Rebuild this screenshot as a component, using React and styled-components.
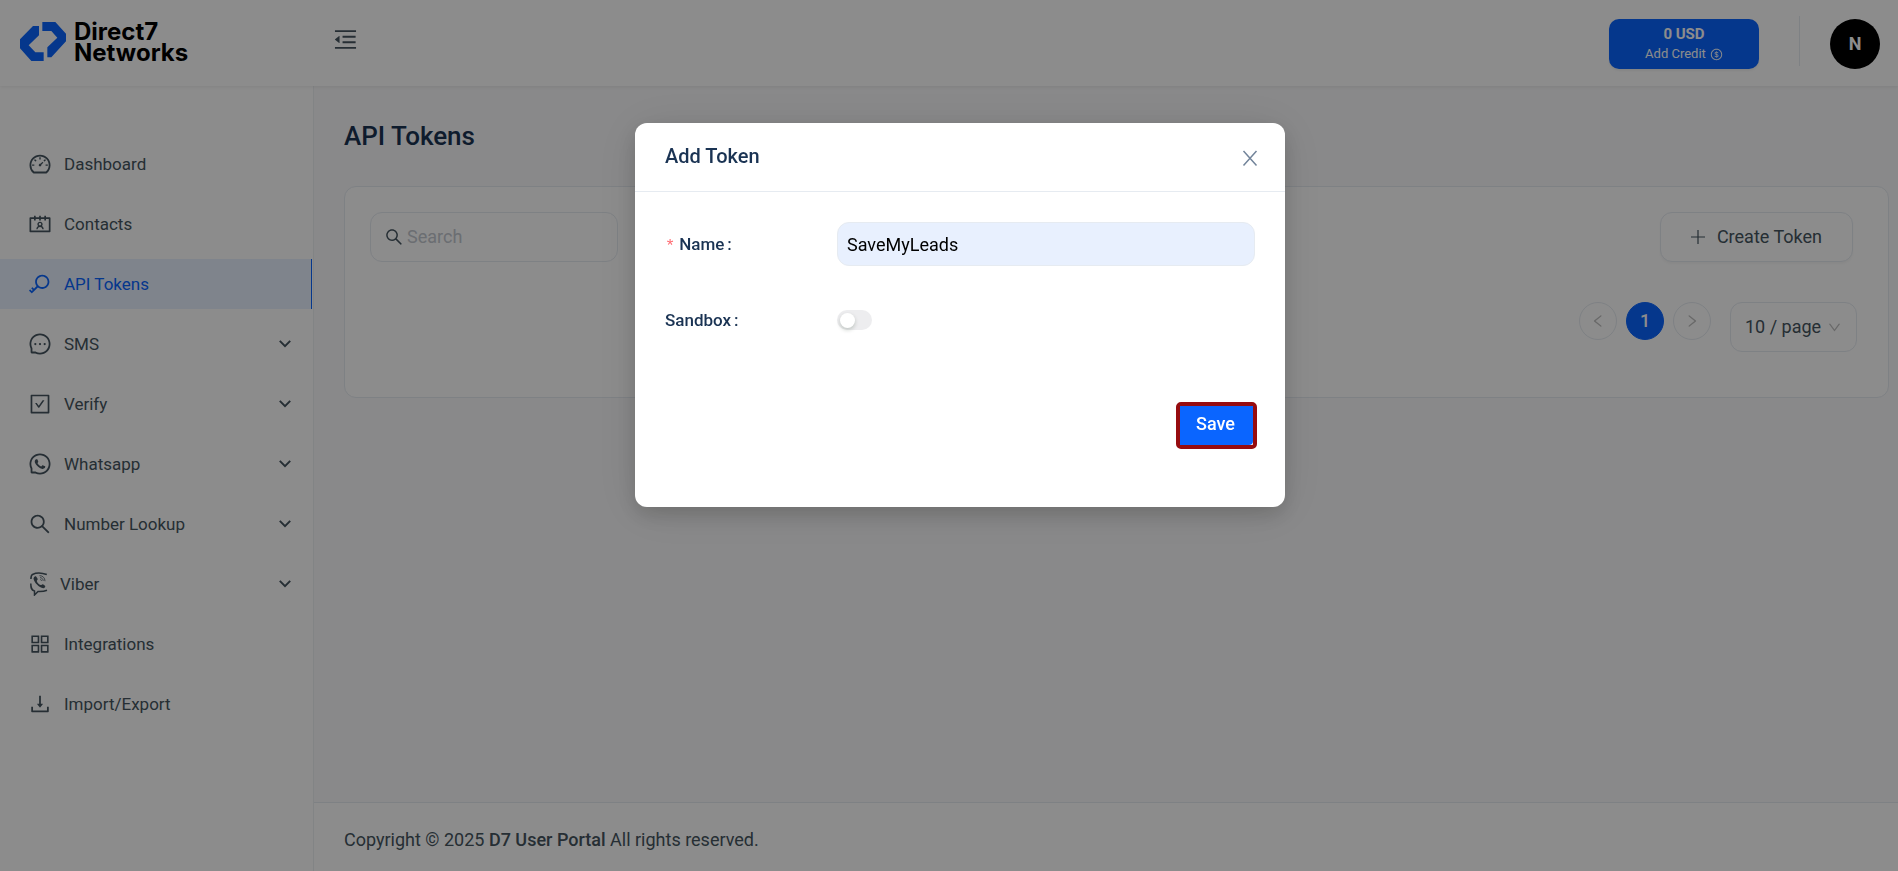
import React, { useState } from "react";
import styled, { createGlobalStyle, css } from "styled-components";
import {
  AiOutlineAppstore,
  AiOutlineCheckSquare,
  AiOutlineContacts,
  AiOutlineDashboard,
  AiOutlineDollar,
  AiOutlineDown,
  AiOutlineDownload,
  AiOutlineKey,
  AiOutlineLeft,
  AiOutlineMenuFold,
  AiOutlineMessage,
  AiOutlineRight,
  AiOutlineSearch,
  AiOutlineWhatsApp,
} from "react-icons/ai";

const GlobalStyle = createGlobalStyle`
  *, *::before, *::after {
    box-sizing: border-box;
  }
  body {
    margin: 0;
    background: #fafafb;
    color: #455560;
    font-family: Roboto, "Liberation Sans", sans-serif;
    font-size: 18px;
    line-height: 26px;
  }
  button, input, select {
    font: inherit;
    color: inherit;
  }
`;

const ViberIcon = () => (
  <svg width="20" height="24" viewBox="-2 0 20 24" fill="none" stroke="currentColor">
    <path d="M16.800 2.600C12 .8 6 .8 2.500 2.400 1.200 3.200 1 5 .9 7" strokeWidth="1.600" />
    <path
      d="M.8 11.500c0 4 .3 6.500 3.700 7.500v4l3.500-3.600c3.500.2 6.500-.2 9-1.200"
      strokeWidth="1.500"
    />
    <path
      d="M4 5.200c.8-1 1.700-1.300 2.300-.5l1.300 2c.5.900-.9 1.500-.8 2.400.6 2 2 3.400 3.900 4 .9.200 1.300-1.300 2.300-.8l2 1.400c.9.800-.4 2.600-1.700 2.600C9 15.500 4 10.500 3.500 6.500z"
      fill="currentColor"
      stroke="none"
    />
    <path
      d="M9.500 3.600c3.300.1 5.500 2.300 5.500 5.600M10 5.600c2 .2 3.100 1.400 3.200 3.300M10.300 7.500c.8.100 1.200.5 1.200 1.300"
      strokeWidth=".8"
    />
  </svg>
);

const ChevronIcon = () => (
  <svg width="12" height="8" viewBox="0 0 12 8" fill="none" stroke="currentColor" strokeWidth="2">
    <path d="M.8.9 6 6.100 11.200.9" />
  </svg>
);

const PlusIcon = () => (
  <svg width="14" height="14" viewBox="0 0 14 14" stroke="currentColor" strokeWidth="1.200">
    <path d="M7 0v14M0 7h14" />
  </svg>
);

const CloseIcon = () => (
  <svg width="16" height="18" viewBox="0 0 16 18" stroke="currentColor" strokeWidth="1.500">
    <path d="M1.500 2 14.500 16.500M14.500 2 1.500 16.500" />
  </svg>
);

const LogoIcon = () => (
  <svg width="46" height="39" viewBox="16 20 138 117" fill="#0a65ff">
    <path d="M73 32v28L42 90l20 21h25v26H50L16 99V72l39-40z" />
    <path d="M83 20h39l32 35v23l-44 48H98V96l30-29-18-20H83z" />
  </svg>
);

const navItems = [
  { title: "Dashboard", icon: AiOutlineDashboard },
  { title: "Contacts", icon: AiOutlineContacts },
  { title: "API Tokens", icon: AiOutlineKey, active: true },
  { title: "SMS", icon: AiOutlineMessage, sub: true },
  { title: "Verify", icon: AiOutlineCheckSquare, sub: true },
  { title: "Whatsapp", icon: AiOutlineWhatsApp, sub: true },
  { title: "Number Lookup", icon: AiOutlineSearch, sub: true },
  { title: "Viber", icon: ViberIcon, sub: true },
  { title: "Integrations", icon: AiOutlineAppstore },
  { title: "Import/Export", icon: AiOutlineDownload },
];

const TokenModal = () => {
  const [name, setName] = useState("SaveMyLeads");
  const [sandbox, setSandbox] = useState(false);

  return (
    <Mask>
      <Dialog role="dialog" aria-modal="true" aria-labelledby="modal-title">
        <DialogHeader>
          <DialogTitle id="modal-title">Add Token</DialogTitle>
          <CloseButton aria-label="Close">
            <CloseIcon />
          </CloseButton>
        </DialogHeader>
        <Form onSubmit={(e) => e.preventDefault()}>
          <FormRow>
            <Label htmlFor="name">
              <Required>*</Required>Name<Colon>:</Colon>
            </Label>
            <NameInput
              id="name"
              value={name}
              onChange={(e) => setName(e.target.value)}
            />
          </FormRow>
          <FormRow>
            <Label htmlFor="sandbox">
              Sandbox<Colon>:</Colon>
            </Label>
            <Switch
              id="sandbox"
              type="checkbox"
              checked={sandbox}
              onChange={(e) => setSandbox(e.target.checked)}
            />
          </FormRow>
          <SaveFrame>
            <SaveButton type="submit">Save</SaveButton>
          </SaveFrame>
        </Form>
      </Dialog>
    </Mask>
  );
};

const App = () => {
  return (
    <>
      <GlobalStyle />
      <Page>
        <Header>
          <Logo href="#">
            <LogoIcon />
            <LogoText>
              Direct7
              <br />
              Networks
            </LogoText>
          </Logo>
          <FoldButton aria-label="Collapse menu">
            <AiOutlineMenuFold />
          </FoldButton>
          <CreditButton>
            <strong>0 USD</strong>
            <span>
              Add Credit <AiOutlineDollar />
            </span>
          </CreditButton>
          <Divider />
          <Avatar>N</Avatar>
        </Header>
        <Body>
          <SideNav>
            {navItems.map(({ title, icon: Icon, active, sub }) => (
              <NavItem key={title} href="#" $active={active}>
                <Icon />
                <span>{title}</span>
                {sub && <ChevronIcon />}
              </NavItem>
            ))}
          </SideNav>
          <Main>
            <Content>
              <PageTitle>API Tokens</PageTitle>
              <Card>
                <Toolbar>
                  <SearchBox>
                    <AiOutlineSearch />
                    <input type="text" placeholder="Search" aria-label="Search" />
                  </SearchBox>
                  <CreateButton>
                    <PlusIcon />
                    Create Token
                  </CreateButton>
                </Toolbar>
                <Pagination>
                  <PageButton aria-label="Previous page">
                    <AiOutlineLeft />
                  </PageButton>
                  <PageButton $current>1</PageButton>
                  <PageButton aria-label="Next page">
                    <AiOutlineRight />
                  </PageButton>
                  <PageSize>
                    <select aria-label="Page size" defaultValue="10">
                      <option value="10">10 / page</option>
                      <option value="20">20 / page</option>
                      <option value="50">50 / page</option>
                    </select>
                    <AiOutlineDown />
                  </PageSize>
                </Pagination>
              </Card>
            </Content>
            <Footer>
              Copyright © 2025 <b>D7 User Portal</b> All rights reserved.
            </Footer>
          </Main>
        </Body>
      </Page>
      <TokenModal />
    </>
  );
};

const Page = styled.div`
  display: flex;
  flex-direction: column;
  min-height: 100vh;
`;

// Header
const Header = styled.header`
  display: flex;
  align-items: center;
  height: 86px;
  padding: 2px 18px 0 20px;
  background: #ffffff;
  box-shadow: 0 1px 4px rgba(0, 0, 0, 0.08);
  z-index: 1;
`;

const Logo = styled.a`
  display: flex;
  align-items: center;
  gap: 8px;
  width: 312px;
  margin-bottom: 5px;
  color: #000000;
  text-decoration: none;
`;

const LogoText = styled.span`
  font-family: Inter, "Liberation Sans", sans-serif;
  font-size: 24px;
  font-weight: 700;
  line-height: 21px;
`;

const FoldButton = styled.button`
  display: flex;
  margin-right: auto;
  margin-bottom: 10px;
  padding: 0;
  border: 0;
  background: none;
  font-size: 27px;
`;

const CreditButton = styled.button`
  display: flex;
  flex-direction: column;
  align-items: center;
  justify-content: center;
  width: 150px;
  height: 50px;
  border: 0;
  border-radius: 10px;
  background: #0a65ff;
  box-shadow: 0 2px 2px rgba(0, 0, 0, 0.05);
  color: #ffffff;
  font-size: 15px;
  line-height: 20px;
  strong {
    font-weight: 700;
  }
  span {
    display: flex;
    align-items: center;
    gap: 4px;
    font-size: 13px;
  }
`;

const Divider = styled.div`
  width: 1px;
  height: 50px;
  margin: 0 30px 6px 40px;
  background: #e6ebf1;
`;

const Avatar = styled.div`
  display: flex;
  align-items: center;
  justify-content: center;
  width: 50px;
  height: 50px;
  border-radius: 50%;
  background: #000000;
  color: #ffffff;
  font-weight: 700;
`;

// Side navigation
const Body = styled.div`
  display: flex;
  flex: 1;
`;

const SideNav = styled.nav`
  display: flex;
  flex-direction: column;
  gap: 10px;
  width: 314px;
  padding-top: 53px;
  border-right: 1px solid #edf0f3;
  background: #ffffff;
`;

const NavItem = styled.a`
  display: flex;
  align-items: center;
  gap: 12px;
  height: 50px;
  margin-right: 1px;
  padding: 0 21px 0 28px;
  color: #455560;
  font-size: 17px;
  text-decoration: none;
  & > svg:first-child {
    height: 24px;
    font-size: 24px;
  }
  span {
    flex: 1;
  }
  ${({ $active }) =>
    $active &&
    css`
      border-right: 1px solid #0a65ff;
      background: #e7f0ff;
      color: #0a65ff;
    `}
`;

// Page content
const Main = styled.main`
  display: flex;
  flex: 1;
  flex-direction: column;
`;

const Content = styled.div`
  flex: 1;
  padding: 32px 9px 32px 30px;
`;

const PageTitle = styled.h1`
  margin: 0 0 32px;
  color: #1a3353;
  font-size: 26px;
  font-weight: 500;
  line-height: 36px;
`;

const Card = styled.section`
  padding: 25px 31px 45px 25px;
  border: 1px solid #e6ebf1;
  border-radius: 12px;
  background: #ffffff;
`;

const Toolbar = styled.div`
  display: flex;
  justify-content: space-between;
  padding-right: 4px;
`;

const outlined = css`
  height: 50px;
  border: 1px solid #e6ebf1;
  border-radius: 12px;
  background: #ffffff;
`;

const SearchBox = styled.label`
  ${outlined}
  display: flex;
  align-items: center;
  gap: 3px;
  width: 248px;
  padding: 0 13px;
  svg {
    flex: none;
    font-size: 20px;
  }
  input {
    width: 100%;
    padding: 0;
    border: 0;
    outline: 0;
    background: none;
  }
  input::placeholder {
    color: #c3c8cf;
  }
`;

const CreateButton = styled.button`
  ${outlined}
  display: flex;
  align-items: center;
  gap: 12px;
  padding: 0 30px;
  box-shadow: 0 2px 2px rgba(0, 0, 0, 0.03);
`;

const Pagination = styled.div`
  display: flex;
  justify-content: flex-end;
  gap: 9px;
  margin-top: 40px;
`;

const PageButton = styled.button`
  display: flex;
  align-items: center;
  justify-content: center;
  width: 38px;
  height: 38px;
  padding: 0;
  border: 1px solid ${({ $current }) => ($current ? "#0a65ff" : "#e6ebf1")};
  border-radius: 50%;
  background: ${({ $current }) => ($current ? "#0a65ff" : "#ffffff")};
  color: ${({ $current }) => ($current ? "#ffffff" : "#bfbfbf")};
  font-weight: 500;
  svg {
    font-size: 16px;
  }
`;

const PageSize = styled.label`
  ${outlined}
  display: flex;
  align-items: center;
  width: 127px;
  margin-left: 10px;
  padding: 0 14px;
  select {
    flex: 1;
    padding: 0;
    border: 0;
    outline: 0;
    appearance: none;
    background: none;
  }
  svg {
    color: #bfbfbf;
    font-size: 15px;
  }
`;

const Footer = styled.footer`
  padding: 24px 30px 18px;
  border-top: 1px solid #e6ebf1;
  background: #ffffff;
  b {
    font-weight: 500;
  }
`;

// Modal
const Mask = styled.div`
  position: fixed;
  inset: 0;
  z-index: 10;
  display: flex;
  align-items: flex-start;
  justify-content: center;
  padding: 123px 0 0 22px;
  background: rgba(0, 0, 0, 0.45);
`;

const Dialog = styled.div`
  width: 650px;
  border-radius: 12px;
  background: #ffffff;
  box-shadow: 0 8px 20px rgba(0, 0, 0, 0.15), 0 4px 48px rgba(0, 0, 0, 0.1);
`;

const DialogHeader = styled.div`
  display: flex;
  align-items: center;
  justify-content: space-between;
  height: 69px;
  padding: 0 27px 0 30px;
  border-bottom: 1px solid #e6ebf1;
`;

const DialogTitle = styled.h2`
  margin: 0 0 2px;
  color: #1a3353;
  font-size: 20px;
  font-weight: 500;
  line-height: 28px;
`;

const CloseButton = styled.button`
  display: flex;
  padding: 2px 0 0;
  border: 0;
  background: none;
  color: #72849a;
`;

const Form = styled.form`
  display: flex;
  flex-direction: column;
  gap: 32px;
  padding: 30px 28px 58px 30px;
`;

const FormRow = styled.div`
  display: flex;
  align-items: center;
  height: 44px;
`;

const Label = styled.label`
  display: flex;
  align-items: center;
  width: 172px;
  color: #1a3353;
  font-size: 17px;
  font-weight: 500;
`;

const Required = styled.span`
  margin-right: 4px;
  padding-top: 5px;
  color: #ff6b72;
  font-family: "Liberation Mono", monospace;
  font-weight: 400;
`;

const Colon = styled.span`
  margin-left: 3px;
`;

const NameInput = styled.input`
  flex: 1;
  height: 44px;
  margin-right: 2px;
  padding: 0 9px;
  border: 1px solid #e6ebf1;
  border-radius: 12px;
  background: #e8f0fe;
  color: #000000;
`;

const Switch = styled.input`
  display: flex;
  align-items: center;
  width: 35px;
  height: 20px;
  margin: 0;
  padding: 0 3px;
  border-radius: 10px;
  appearance: none;
  background: #ededef;
  &::before {
    content: "";
    width: 15px;
    height: 15px;
    border-radius: 50%;
    background: #ffffff;
    box-shadow: 0 2px 4px rgba(0, 35, 11, 0.2);
  }
  &:checked {
    justify-content: flex-end;
    background: #0a65ff;
  }
`;

const SaveFrame = styled.div`
  align-self: flex-end;
  margin-top: 28px;
  border: 4px solid #960c10;
  border-radius: 5px;
`;

const SaveButton = styled.button`
  display: block;
  width: 73px;
  height: 39px;
  padding: 0 2px 4px 0;
  border: 0;
  border-radius: 0 0 4px 0;
  background: #0a65ff;
  color: #ffffff;
  font-weight: 500;
`;

export default App;
